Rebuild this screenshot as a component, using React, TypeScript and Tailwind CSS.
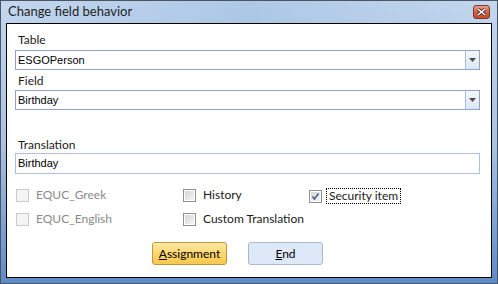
import React from 'react';

const ui = { fontFamily: 'Lato, "Noto Sans", sans-serif' };
const ms = { fontFamily: '"Liberation Sans", Arial, sans-serif' };

function Combo({ value }: { value: string }) {
  return (
    <div className="flex h-[20px] w-[465px] items-stretch border border-[#8ea4c2] bg-white">
      <div className="flex flex-1 items-center pl-[2px] text-[11px] text-black" style={ms}>
        {value}
      </div>
      <div className="flex w-[14px] items-center justify-center border-l border-[#a9bcd6] bg-gradient-to-b from-[#f3f7fc] to-[#dce6f4]">
        <svg width="7" height="4" viewBox="0 0 7 4">
          <path d="M0 0h7L3.5 4z" fill="#4d4d4d" />
        </svg>
      </div>
    </div>
  );
}

function Check({ label, checked, disabled, focus }: { label: string; checked?: boolean; disabled?: boolean; focus?: boolean }) {
  return (
    <div className="flex h-[14px] items-center whitespace-nowrap">
      <div
        className={
          'flex h-[13px] w-[13px] shrink-0 items-center justify-center border ' +
          (disabled ? 'border-[#c9c9c9] bg-[#f4f4f4]' : 'border-[#8e8f8f] bg-white')
        }
      >
        <div
          className={
            'flex h-[9px] w-[9px] items-center justify-center ' +
            (disabled ? 'bg-[#f4f4f4]' : 'bg-gradient-to-br from-[#d4d4d4] to-[#f7f7f7]')
          }
        >
          {checked && (
            <svg width="9" height="9" viewBox="0 0 9 9">
              <path d="M1.5 4.5L3.5 7L7.5 1.5" stroke="#4a5c96" strokeWidth="1.6" fill="none" />
            </svg>
          )}
        </div>
      </div>
      <span
        className={
          'ml-[5px] px-[2px] text-[12px] leading-[14px] ' +
          (disabled ? 'text-[#8a8a8a]' : 'text-[#1a1a1a]') +
          (focus ? ' outline outline-1 outline-dotted outline-black' : '')
        }
        style={ui}
      >
        {label}
      </span>
    </div>
  );
}

export default function App() {
  return (
    <div className="h-[284px] w-[498px] overflow-hidden bg-white">
      <div className="flex h-full w-full flex-col border border-[#4b5563] bg-gradient-to-b from-[#c3d7ee] via-[#a9c3e3] to-[#5f8cc6] px-[5px] pb-[5px]">
        {/* title bar */}
        <div className="relative flex h-[22px] items-center bg-gradient-to-r from-transparent via-[#8fb2dc]/40 to-transparent">
          <span className="ml-[2px] text-[13px] text-[#1e1e1e]" style={ui}>
            Change field behavior
          </span>
          <div className="absolute right-[2px] top-[4px] flex h-[14px] w-[17px] items-center justify-center rounded-[3px] border border-[#7b3a2c] bg-gradient-to-b from-[#e9a08c] via-[#d55f43] to-[#c8492e]">
            <svg width="9" height="8" viewBox="0 0 9 8">
              <path d="M1 1l7 6M8 1L1 7" stroke="#3a2a2a" strokeWidth="3" />
              <path d="M1 1l7 6M8 1L1 7" stroke="#ffffff" strokeWidth="1.6" />
            </svg>
          </div>
        </div>
        {/* client */}
        <div className="flex flex-1 flex-col border border-black bg-white pl-[8px]">
          <div className="mt-[8px] text-[12px] leading-[16px] text-[#1a1a1a]" style={ui}>
            <span className="ml-[3px]">Table</span>
          </div>
          <div className="mt-[2px]">
            <Combo value="ESGOPerson" />
          </div>
          <div className="mt-[3px] text-[12px] leading-[16px] text-[#1a1a1a]" style={ui}>
            <span className="ml-[3px]">Field</span>
          </div>
          <div className="mt-[1px]">
            <Combo value="Birthday" />
          </div>
          <div className="mt-[27px] text-[12px] leading-[16px] text-[#1a1a1a]" style={ui}>
            <span className="ml-[3px]">Translation</span>
          </div>
          <div className="flex h-[21px] w-[465px] items-center border border-[#abc1de] pl-[2px] text-[11px] text-black" style={ms}>
            Birthday
          </div>
          <div className="mt-[14px] flex">
            <div className="flex w-[168px] flex-col gap-[10px] pl-[1px]">
              <Check label="EQUC_Greek" disabled />
              <Check label="EQUC_English" disabled />
            </div>
            <div className="flex w-[126px] flex-col gap-[10px]">
              <Check label="History" />
              <Check label="Custom Translation" />
            </div>
            <div className="flex flex-col pt-[1px]">
              <Check label="Security item" checked focus />
            </div>
          </div>
          <div className="mt-[16px] flex gap-[21px] pl-[137px]">
            <button className="h-[23px] w-[75px] rounded-[3px] border border-[#c4953a] bg-gradient-to-b from-[#fee9a6] via-[#fdd66e] to-[#fbc84e] text-[12px] text-black" style={ui}>
              <u>A</u>ssignment
            </button>
            <button className="h-[23px] w-[75px] rounded-[3px] border border-[#a8b8d2] bg-[#dde9f9] text-[12px] text-black" style={ui}>
              <u>E</u>nd
            </button>
          </div>
        </div>
      </div>
    </div>
  );
}
